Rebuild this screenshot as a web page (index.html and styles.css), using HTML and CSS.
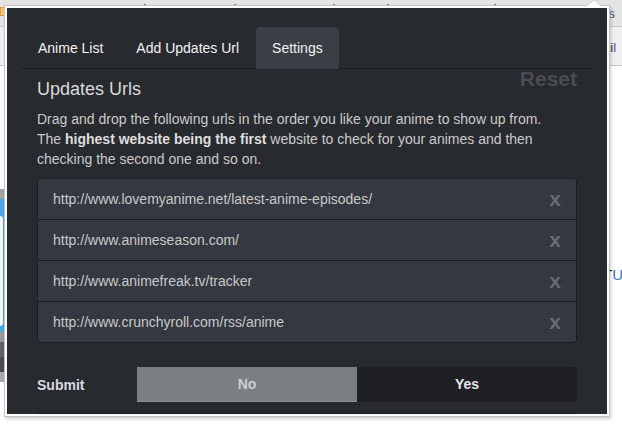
FILE: index.html
```html
<!DOCTYPE html>
<html lang="en">
<head>
<meta charset="utf-8">
<title>Settings</title>
<link rel="stylesheet" href="styles.css">
</head>
<body>
<div class="page">
  <div class="toolbar">
    <span class="orange"></span>
    <span class="mark m1"></span><span class="mark m2"></span><span class="mark m3"></span><span class="mark m4"></span><span class="mark m5"></span>
    <span class="peek ts">ts</span>
  </div>
  <div class="bookmarks"><span class="peek ail">ai<em>l</em></span></div>
  <div class="content">
    <div class="side-bands">
      <span class="band b-gray"></span>
      <span class="band b-blue"><i></i></span>
      <span class="band b-g1"></span>
      <span class="band b-g2"></span>
      <span class="band b-g3"></span>
      <span class="band b-g4"></span>
    </div>
    <span class="peek tu">T<em>U</em></span>
  </div>

  <div class="popup">
    <div class="panel">
      <ul class="tabs">
        <li><a>Anime List</a></li>
        <li><a>Add Updates Url</a></li>
        <li class="active"><a>Settings</a></li>
      </ul>
      <div class="tab-content">
        <div class="section-head">
          <h3>Updates Urls</h3>
          <span class="reset">Reset</span>
        </div>
        <p class="desc">Drag and drop the following urls in the order you like your anime to show up from.<br>The <b>highest website being the first</b> website to check for your animes and then<br>checking the second one and so on.</p>
        <ul class="urls">
          <li><span>http://www.lovemyanime.net/latest-anime-episodes/</span><span class="close">x</span></li>
          <li><span>http://www.animeseason.com/</span><span class="close">x</span></li>
          <li><span>http://www.animefreak.tv/tracker</span><span class="close">x</span></li>
          <li><span>http://www.crunchyroll.com/rss/anime</span><span class="close">x</span></li>
        </ul>
        <div class="submit-row">
          <span class="label">Submit</span>
          <div class="switch">
            <span class="opt no">No</span>
            <span class="opt yes">Yes</span>
          </div>
        </div>
        <div class="divider"></div>
      </div>
    </div>
  </div>
  <div class="arrow"></div>
</div>
</body>
</html>
```
FILE: styles.css
```css
html, body {
  margin: 0;
  padding: 0;
}
body {
  width: 622px;
  height: 426px;
  overflow: hidden;
  background: #ffffff;
  font-family: "Liberation Sans", Arial, sans-serif;
}
.page {
  position: relative;
  width: 622px;
  height: 426px;
  overflow: hidden;
}

/* underlying browser page */
.toolbar {
  position: relative;
  height: 26px;
  background: #e4e4e4;
  border-bottom: 1px solid #c9c9c9;
}
.bookmarks {
  position: relative;
  height: 38px;
  background: #efefef;
  border-bottom: 1px solid #c8c8c8;
}
.content {
  position: relative;
  height: 359px;
}
.orange {
  position: absolute;
  left: 0;
  top: 7px;
  width: 6px;
  height: 9px;
  background: #f8c878;
  border: 1px solid #d9a24a;
  box-sizing: border-box;
}
.mark {
  position: absolute;
  top: 4px;
  width: 2px;
  height: 1px;
  background: #9a7a56;
}
.m1 { left: 144px; }
.m2 { left: 234px; }
.m3 { left: 333px; }
.m4 { left: 387px; }
.m5 { left: 494px; }
.peek {
  position: absolute;
  font-size: 13px;
  line-height: 14px;
  white-space: nowrap;
}
.peek em { font-style: normal; }
.ts { left: 605px; top: 7px; color: #3d5a80; }
.ail { left: 603px; top: 14px; color: #333; }
.ail em { color: #7b2f8f; }
.tu { left: 603px; top: 202px; color: #111; font-size: 15px; }
.tu em { color: #2e7bc4; }
.side-bands {
  position: absolute;
  left: 0;
  top: 123px;
  width: 6px;
  display: flex;
  flex-direction: column;
}
.band { display: block; width: 6px; }
.b-gray { height: 10px; background: #a3a3a3; }
.b-blue { height: 133px; background: #4aaae6; position: relative; }
.b-blue i {
  position: absolute;
  left: -4px;
  top: 17px;
  width: 7px;
  height: 110px;
  background: #f4f6f8;
  border-radius: 4px;
}
.b-g1 { height: 10px; background: #9a9a9a; }
.b-g2 { height: 15px; background: #606060; }
.b-g3 { height: 15px; background: #4b4b4b; }
.b-g4 { height: 10px; background: #acacac; }

/* popup window */
.popup {
  position: absolute;
  left: 4px;
  top: 5px;
  padding: 2px;
  background: #ffffff;
  border: 1px solid #c4c4c4;
  box-shadow: 1px 2px 3px rgba(0, 0, 0, 0.2);
}
.arrow {
  position: absolute;
  left: 586px;
  top: 0;
  width: 0;
  height: 0;
  border-left: 8px solid transparent;
  border-right: 8px solid transparent;
  border-bottom: 7px solid #ffffff;
  filter: drop-shadow(0 -1px 0 #c4c4c4);
}
.panel {
  width: 600px;
  height: 406px;
  box-sizing: border-box;
  padding: 0 15px;
  background: #272a2f;
  overflow: hidden;
  color: #cfcfcf;
  font-size: 14px;
  line-height: 20px;
}

/* tabs */
.tabs {
  list-style: none;
  margin: 0;
  padding: 19px 0 0;
  display: flex;
  border-bottom: 1px solid #1b1d21;
}
.tabs li {
  margin: 0 1px -1px 0;
}
.tabs a {
  display: block;
  padding: 10px 15px;
  line-height: 20px;
  border: 1px solid transparent;
  border-radius: 4px 4px 0 0;
  color: #f2f2f2;
}
.tabs .active a {
  background: #3a3f46;
  border-color: #3a3f46;
}

.tab-content {
  padding: 0 15px;
}
.section-head {
  display: flex;
  justify-content: space-between;
  align-items: flex-start;
}
.section-head h3 {
  margin: 10px 0 0;
  font-size: 18px;
  font-weight: normal;
  line-height: 20px;
  color: #dadada;
}
.reset {
  font-size: 21px;
  font-weight: bold;
  line-height: 20px;
  color: #4a4d52;
}
.desc {
  margin: 10px 0 9px;
  color: #cbcbcb;
}
.desc b { color: #dedede; }

/* url list */
.urls {
  list-style: none;
  margin: 0;
  padding: 0;
  border: 1px solid #1b1d21;
  border-radius: 4px;
  overflow: hidden;
}
.urls li {
  display: flex;
  justify-content: space-between;
  padding: 10px 15px;
  line-height: 20px;
  background: #343840;
  color: #c9c9c9;
}
.urls li + li {
  border-top: 1px solid #1b1d21;
}
.close {
  font-size: 21px;
  font-weight: bold;
  line-height: 20px;
  color: #686b70;
}

/* submit switch */
.submit-row {
  margin-top: 24px;
  display: flex;
  align-items: center;
  height: 35px;
}
.label {
  width: 100px;
  font-weight: bold;
  color: #d9dbe0;
}
.switch {
  flex: 1;
  display: flex;
  height: 35px;
  border-radius: 0 4px 4px 0;
  overflow: hidden;
}
.opt {
  flex: 1;
  text-align: center;
  line-height: 35px;
  font-weight: bold;
}
.no {
  background: #7a7f84;
  color: #cdd0d3;
  box-shadow: inset 0 -1px 0 #8a8f94;
}
.yes {
  background: #1e2023;
  color: #e6e6e6;
}
.divider {
  margin-top: 11px;
  border-top: 1px solid #1b1d21;
}
```
